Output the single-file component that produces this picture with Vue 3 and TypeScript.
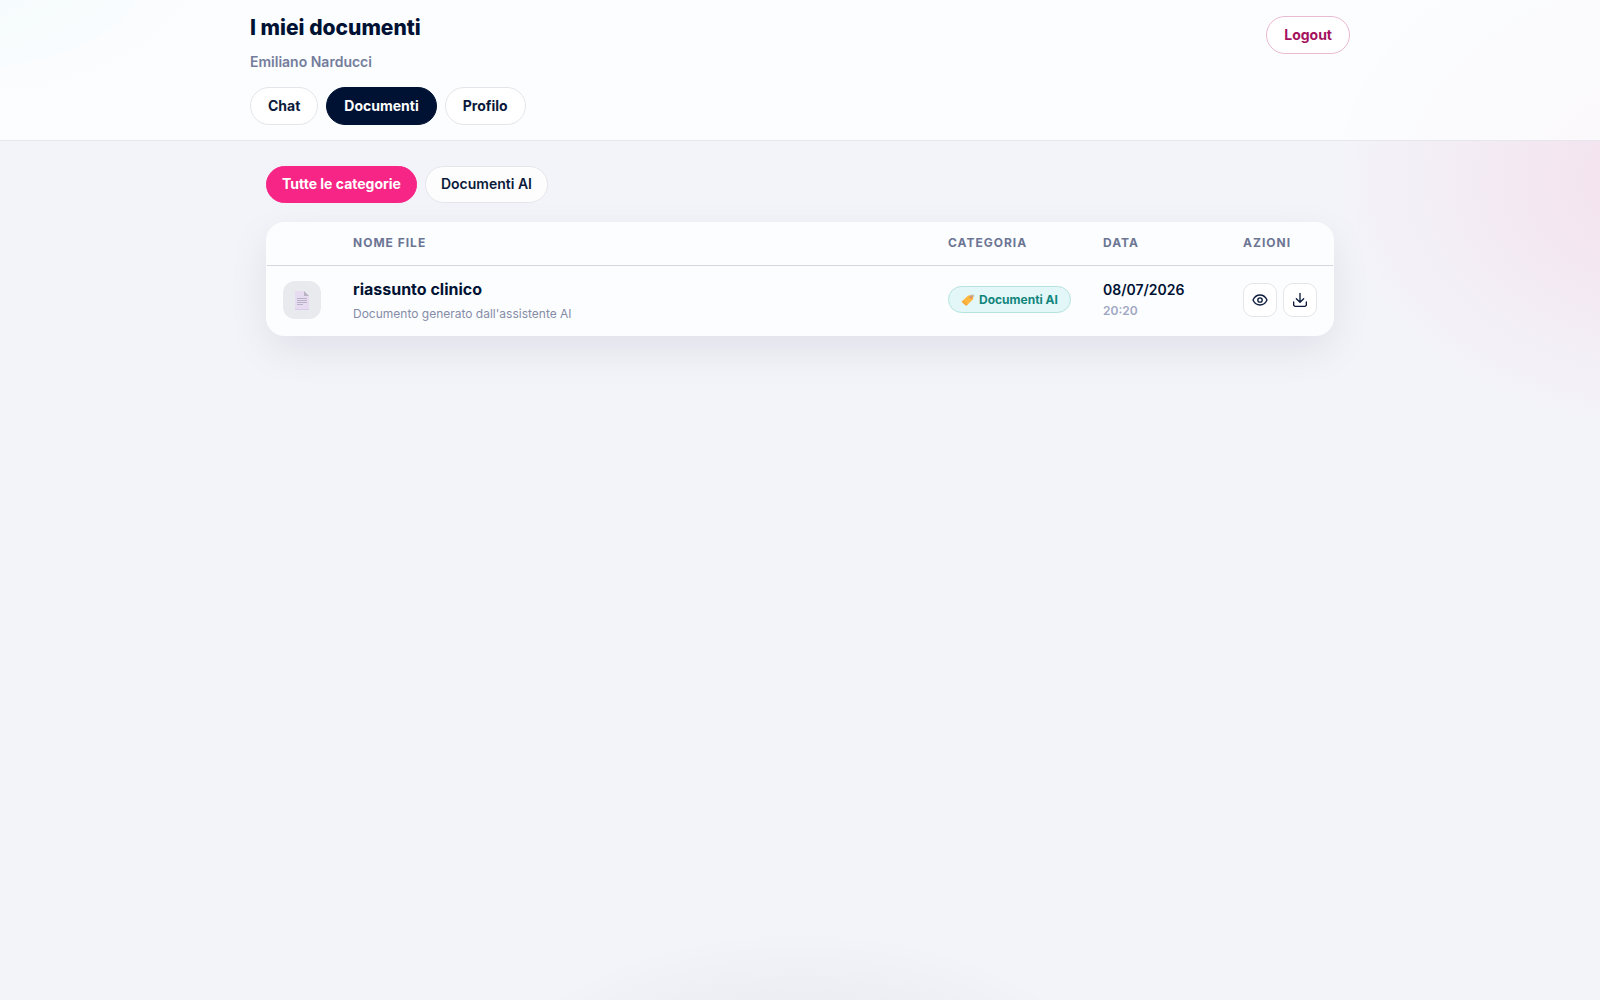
<script setup lang="ts">
import { ref } from 'vue'

interface Doc {
  name: string
  description: string
  category: string
  date: string
  time: string
}

const tabs = ['Chat', 'Documenti', 'Profilo']
const activeTab = ref('Documenti')

const categories = ['Tutte le categorie', 'Documenti AI']
const activeCategory = ref('Tutte le categorie')

const docs: Doc[] = [
  {
    name: 'riassunto clinico',
    description: "Documento generato dall'assistente AI",
    category: 'Documenti AI',
    date: '08/07/2026',
    time: '20:20',
  },
]
</script>

<template>
  <div class="page">
    <header class="topbar">
      <div class="topbar-inner">
        <div class="topbar-row">
          <div>
            <h1 class="title">I miei documenti</h1>
            <p class="user">Emiliano Narducci</p>
          </div>
          <button type="button" class="pill logout">Logout</button>
        </div>
        <nav class="tabs">
          <button
            v-for="tab in tabs"
            :key="tab"
            type="button"
            class="pill"
            :class="{ selected: tab === activeTab }"
            @click="activeTab = tab"
          >{{ tab }}</button>
        </nav>
      </div>
    </header>

    <main class="content">
      <div class="filters">
        <button
          v-for="category in categories"
          :key="category"
          type="button"
          class="pill filter"
          :class="{ chosen: category === activeCategory }"
          @click="activeCategory = category"
        >{{ category }}</button>
      </div>

      <div class="card">
        <table class="docs">
          <colgroup>
            <col class="col-icon">
            <col>
            <col class="col-category">
            <col class="col-date">
            <col class="col-actions">
          </colgroup>
          <thead>
            <tr>
              <th></th>
              <th scope="col">Nome file</th>
              <th scope="col">Categoria</th>
              <th scope="col">Data</th>
              <th scope="col">Azioni</th>
            </tr>
          </thead>
          <tbody>
            <tr v-for="doc in docs" :key="doc.name">
              <td>
                <span class="file-icon">
                  <svg width="14" height="20" viewBox="0 0 14 20" aria-hidden="true">
                    <path d="M0 1h9l5 5v14H0z" fill="#e6dbf1" />
                    <path d="M9 1l5 5H9z" fill="#b9b3c4" />
                    <path d="M2 8.500h10M2 10.500h10M2 12.500h10M2 14.500h6" stroke="#b9b1c5" stroke-width="1" />
                    <path d="M0 19.500h14" stroke="#dacbe9" />
                  </svg>
                </span>
              </td>
              <td>
                <div class="name">{{ doc.name }}</div>
                <div class="description">{{ doc.description }}</div>
              </td>
              <td>
                <span class="chip">
                  <svg width="14" height="12" viewBox="0 0 14 12" aria-hidden="true">
                    <path d="M1 7.200L7.200 1.500L11.800 1L12.300 5L6 11.200Q5 11.800 4.200 11L1.200 8.400Q.6 7.800 1 7.200z" fill="#fdb73e" />
                    <path d="M1 7.500L4.300 11Q5 11.800 6 11.200L6.500 10.700L1.800 6.500z" fill="#f2a43a" />
                    <circle cx="10" cy="3.200" r="1.400" fill="#e2896a" />
                    <path d="M10 3.200Q9.800.8 11.500.8Q13.500.8 12.600 3" fill="none" stroke="#aab4bd" stroke-width="1" />
                  </svg>
                  {{ doc.category }}
                </span>
              </td>
              <td>
                <div class="date">{{ doc.date }}</div>
                <div class="time">{{ doc.time }}</div>
              </td>
              <td>
                <div class="actions">
                  <button type="button" class="action" aria-label="Visualizza">
                    <svg width="16" height="16" viewBox="0 0 24 24" aria-hidden="true">
                      <path d="M1.500 12S5 4.500 12 4.500S22.500 12 22.500 12S19 19.500 12 19.500S1.500 12 1.500 12z" />
                      <circle cx="12" cy="12" r="3.300" />
                    </svg>
                  </button>
                  <button type="button" class="action" aria-label="Scarica">
                    <svg width="16" height="16" viewBox="0 0 24 24" aria-hidden="true">
                      <path d="M12 2v13M6.500 10l5.500 5.500l5.500-5.500M2.500 15v4a2.500 2.500 0 0 0 2.500 2.500h14a2.500 2.500 0 0 0 2.500-2.500v-4" />
                    </svg>
                  </button>
                </div>
              </td>
            </tr>
          </tbody>
        </table>
      </div>
    </main>
  </div>
</template>

<style>
body {
  margin: 0;
}
</style>

<style scoped>
.page {
  min-height: 100vh;
  box-sizing: border-box;
  color: #001233;
  font-family: Inter, "Liberation Sans", sans-serif;
  background:
    radial-gradient(240px 130px at -40px -32px, rgba(0, 190, 220, 0.14), transparent),
    radial-gradient(350px 255px at 105% 180px, rgba(247, 37, 133, 0.1), transparent),
    radial-gradient(380px 270px at 50% 120%, rgba(0, 18, 51, 0.11), transparent),
    #f3f4f9;
}

.topbar {
  background: rgba(254, 255, 255, 0.76);
  border-bottom: 1px solid #e6e7ec;
}

.topbar-inner {
  max-width: 1100px;
  margin: 0 auto;
  padding: 16px 16px 15px;
}

.topbar-row {
  display: flex;
  justify-content: space-between;
  align-items: flex-start;
}

.title {
  margin: 0;
  font-size: 21px;
  line-height: 24px;
  font-weight: 800;
}

.user {
  margin: 12px 0 0;
  font-size: 14px;
  line-height: 20px;
  font-weight: 600;
  color: #747c9c;
}

.tabs,
.filters {
  display: flex;
  flex-wrap: wrap;
  gap: 8px;
}

.tabs {
  margin-top: 15px;
}

.pill {
  box-sizing: border-box;
  height: 38px;
  padding: 0 17px;
  border: 1px solid #e5e6eb;
  border-radius: 19px;
  background: #fff;
  color: #0b1a3a;
  font: 700 14px/20px Inter, "Liberation Sans", sans-serif;
  cursor: pointer;
}

.selected {
  background: #001233;
  border-color: #001233;
  color: #fff;
}

.logout {
  border-color: #eab9d2;
  color: #a4125e;
}

.filter {
  height: 37px;
  padding: 0 15px 1px;
  font-weight: 600;
  background: #fdfdfe;
}

.chosen {
  background: #f72585;
  border-color: #f72585;
  color: #fff;
  font-weight: 700;
}

.content {
  max-width: 1068px;
  margin: 0 auto;
  padding: 25px 16px;
}

.card {
  margin-top: 19px;
  border: 1px solid #fdfdfe;
  border-radius: 18px;
  background: #fcfdfe;
  box-shadow: 0 14px 40px rgba(0, 18, 51, 0.08);
}

.docs {
  width: 100%;
  table-layout: fixed;
  border-collapse: collapse;
}

.col-icon {
  width: 70px;
}

.col-category {
  width: 155px;
}

.col-date {
  width: 140px;
}

.col-actions {
  width: 106px;
}

th {
  height: 40px;
  padding: 0 16px 2px;
  border-bottom: 1px solid #d5d7de;
  text-align: left;
  text-transform: uppercase;
  font-size: 12px;
  line-height: 16px;
  font-weight: 700;
  letter-spacing: 1px;
  color: #6c7594;
}

td {
  height: 67px;
  padding: 0 16px 2px;
  vertical-align: middle;
}

.file-icon {
  display: flex;
  align-items: center;
  justify-content: center;
  width: 38px;
  height: 38px;
  border-radius: 12px;
  background: #e9eaee;
}

.name {
  font-size: 16px;
  line-height: 24px;
  font-weight: 700;
}

.description {
  margin-top: 4px;
  font-size: 12px;
  line-height: 18px;
  color: #858ca8;
}

.chip {
  box-sizing: border-box;
  display: inline-flex;
  align-items: center;
  gap: 4px;
  height: 27px;
  padding: 0 12px;
  border: 1px solid #b5e3de;
  border-radius: 14px;
  background: #e3f7f9;
  color: #11857c;
  font-size: 12px;
  line-height: 16px;
  font-weight: 700;
  white-space: nowrap;
}

.date {
  font-size: 14px;
  line-height: 20px;
  font-weight: 600;
}

.time {
  margin-top: 2px;
  font-size: 12px;
  line-height: 18px;
  font-weight: 600;
  color: #a0a7c2;
}

.actions {
  display: flex;
  gap: 6px;
}

.action {
  box-sizing: border-box;
  display: flex;
  align-items: center;
  justify-content: center;
  width: 34px;
  height: 34px;
  padding: 0;
  border: 1px solid #e5e6eb;
  border-radius: 10px;
  background: #fff;
  cursor: pointer;
}

.action svg {
  fill: none;
  stroke: #0b1a3a;
  stroke-width: 2;
  stroke-linecap: round;
  stroke-linejoin: round;
}
</style>
